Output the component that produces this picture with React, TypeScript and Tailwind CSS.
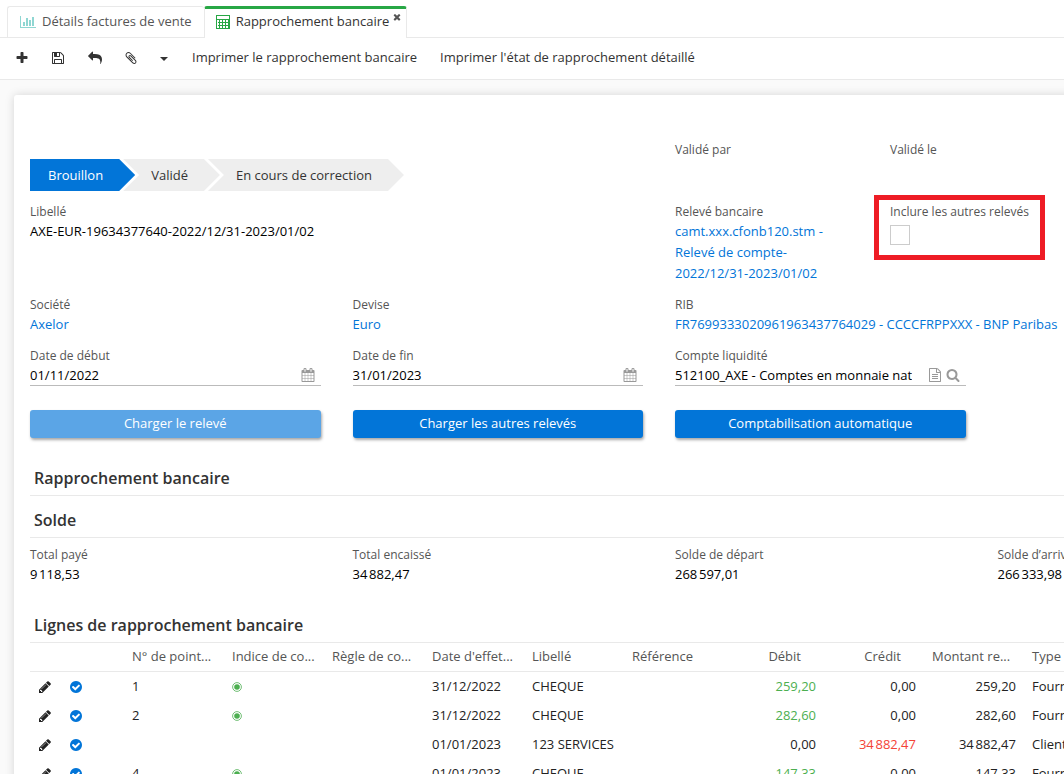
import { useState, type ReactNode } from "react";
import clsx from "clsx";

const icons = {
  plus: "M1600 736v192q0 40-28 68t-68 28h-416v416q0 40-28 68t-68 28h-192q-40 0-68-28t-28-68v-416h-416q-40 0-68-28t-28-68v-192q0-40 28-68t68-28h416v-416q0-40 28-68t68-28h192q40 0 68 28t28 68v416h416q40 0 68 28t28 68z",
  save: "M512 1536h768v-384h-768v384zm896 0h128v-896q0-14-10-38.5t-20-34.5l-281-281q-10-10-34-20t-39-10v416q0 40-28 68t-68 28h-576q-40 0-68-28t-28-68v-416h-128v1280h128v-416q0-40 28-68t68-28h832q40 0 68 28t28 68v416zm-384-928v-320q0-13-9.5-22.5t-22.5-9.5h-192q-13 0-22.5 9.5t-9.5 22.5v320q0 13 9.5 22.5t22.5 9.5h192q13 0 22.5-9.5t9.5-22.5zm640 32v928q0 40-28 68t-68 28h-1344q-40 0-68-28t-28-68v-1344q0-40 28-68t68-28h928q40 0 88 20t76 48l280 280q28 28 48 76t20 88z",
  forward:
    "M1792 640q0 26-19 45l-512 512q-19 19-45 19t-45-19-19-45v-256h-224q-98 0-175.5 6t-154 21.5-133 42.5-105.5 69.5-80 101-48.5 138.5-17.5 181q0 55 5 123 0 6 2.5 23.5t2.5 26.5q0 15-8.5 25t-23.5 10q-16 0-28-17-7-9-13-22t-13.5-30-10.5-24q-127-285-127-451 0-199 53-333 162-403 875-403h224v-256q0-26 19-45t45-19 45 19l512 512q19 19 19 45z",
  clip: "M1596 1385q0 117-79 196t-196 79q-135 0-235-100l-777-776q-113-115-113-271 0-159 110-270t269-111q158 0 273 113l605 606q10 10 10 22 0 16-30.5 46.5t-46.5 30.5q-13 0-23-10l-606-607q-79-77-181-77-106 0-179 75t-73 181q0 105 76 181l776 777q63 63 145 63 64 0 106-42t42-106q0-82-63-145l-581-581q-26-24-60-24-29 0-48 19t-19 48q0 32 25 59l410 410q10 10 10 22 0 16-31 47t-47 31q-12 0-22-10l-410-410q-63-61-63-149 0-82 57-139t139-57q88 0 149 63l581 581q100 98 100 235z",
  calendar:
    "M192 1664h288v-288h-288v288zm352 0h320v-288h-320v288zm-352-352h288v-320h-288v320zm352 0h320v-320h-320v320zm-352-384h288v-288h-288v288zm736 736h320v-288h-320v288zm-384-736h320v-288h-320v288zm768 736h288v-288h-288v288zm-384-352h320v-320h-320v320zm-352-864v-288q0-13-9.5-22.5t-22.5-9.5h-64q-13 0-22.5 9.5t-9.5 22.5v288q0 13 9.5 22.5t22.5 9.5h64q13 0 22.5-9.5t9.5-22.5zm736 864h288v-320h-288v320zm-384-384h320v-288h-320v288zm384 0h288v-288h-288v288zm32-480v-288q0-13-9.5-22.5t-22.5-9.5h-64q-13 0-22.5 9.5t-9.5 22.5v288q0 13 9.5 22.5t22.5 9.5h64q13 0 22.5-9.5t9.5-22.5zm384-64v1280q0 52-38 90t-90 38h-1408q-52 0-90-38t-38-90v-1280q0-52 38-90t90-38h128v-96q0-66 47-113t113-47h64q66 0 113 47t47 113v96h384v-96q0-66 47-113t113-47h64q66 0 113 47t47 113v96h128q52 0 90 38t38 90z",
  pencil:
    "M491 1536l91-91-235-235-91 91v107h128v128h107zm523-928q0-22-22-22-10 0-17 7l-542 542q-7 7-7 17 0 22 22 22 10 0 17-7l542-542q7-7 7-17zm-54-192l416 416-832 832h-416v-416zm683 96q0 53-37 90l-166 166-416-416 166-165q36-38 90-38 53 0 91 38l235 234q37 39 37 91z",
  check:
    "M1412 734q0-28-18-46l-91-90q-19-19-45-19t-45 19l-408 407-226-226q-19-19-45-19t-45 19l-91 90q-18 18-18 46 0 27 18 45l362 362q19 19 45 19 27 0 46-19l543-543q18-18 18-45zm252 162q0 209-103 385.5t-279.5 279.5-385.5 103-385.5-103-279.5-279.5-103-385.5 103-385.5 279.5-279.5 385.5-103 385.5 103 279.5 279.5 103 385.5z",
  search:
    "M1216 832q0-185-131.5-316.5t-316.5-131.5-316.5 131.5-131.5 316.5 131.5 316.5 316.5 131.5 316.5-131.5 131.5-316.5zm512 832q0 52-38 90t-90 38q-54 0-90-38l-343-342q-179 124-399 124-143 0-273.5-55.5t-225-150-150-225-55.5-273.5 55.5-273.5 150-225 225-150 273.5-55.5 273.5 55.5 225 150 150 225 55.5 273.5q0 220-124 399l343 343q37 37 37 90z",
  file: "M1596 380q28 28 48 76t20 88v1152q0 40-28 68t-68 28h-1344q-40 0-68-28t-28-68v-1600q0-40 28-68t68-28h896q40 0 88 20t76 48zm-444-244v376h376q-10-29-22-41l-313-313q-12-12-41-22zm384 1528v-1024h-416q-40 0-68-28t-28-68v-416h-768v1536h1280zm-1024-864q0-14 9-23t23-9h704q14 0 23 9t9 23v64q0 14-9 23t-23 9h-704q-14 0-23-9t-9-23v-64zm736 224q14 0 23 9t9 23v64q0 14-9 23t-23 9h-704q-14 0-23-9t-9-23v-64q0-14 9-23t23-9h704zm0 256q14 0 23 9t9 23v64q0 14-9 23t-23 9h-704q-14 0-23-9t-9-23v-64q0-14 9-23t23-9h704z",
  close:
    "M1490 1322q0 40-28 68l-136 136q-28 28-68 28t-68-28l-294-294-294 294q-28 28-68 28t-68-28l-136-136q-28-28-28-68t28-68l294-294-294-294q-28-28-28-68t28-68l136-136q28-28 68-28t68 28l294 294 294-294q28-28 68-28t68 28l136 136q28 28 28 68t-28 68l-294 294 294 294q28 28 28 68z",
};

function Icon({ name, className }: { name: keyof typeof icons; className?: string }) {
  return (
    <svg viewBox="0 0 1792 1792" fill="currentColor" aria-hidden="true" className={clsx("shrink-0", className)}>
      <path d={icons[name]} />
    </svg>
  );
}

function ChartIcon() {
  return (
    <svg viewBox="0 0 2048 1792" fill="currentColor" aria-hidden="true" className="h-[14px] w-4 text-[#8fd6d2]">
      <path d="M640 896v512h-256v-512h256zm384-512v1024h-256v-1024h256zm1024 1152v128h-2048v-1536h128v1408h1920zm-640-896v768h-256v-768h256zm384-384v1152h-256v-1152h256z" />
    </svg>
  );
}

function CalculatorIcon() {
  return (
    <svg viewBox="0 0 14 14" fill="none" stroke="currentColor" aria-hidden="true" className="size-[14px] text-[#28a745]">
      <rect x="0.5" y="0.5" width="13" height="13" />
      <path d="M1 4.5h12M2 7.5h10M2 10.5h10M3.5 5v8M6.5 5v8M9.5 5v8M12.5 5v8" />
    </svg>
  );
}

const label = "block text-xs leading-[18px] text-[#555]";
const value = "text-[13px] leading-[21px] text-black";

function Field({ title, className, children }: { title: string; className?: string; children?: ReactNode }) {
  return (
    <div className={className}>
      <div className={label}>{title}</div>
      <div className={value}>{children}</div>
    </div>
  );
}

function LinkField({ title, text, className }: { title: string; text: string; className?: string }) {
  return (
    <Field title={title} className={className}>
      <a href="#" className="text-[#0275d8] hover:underline">
        {text}
      </a>
    </Field>
  );
}

function InputField({
  id,
  title,
  initial,
  children,
}: {
  id: string;
  title: string;
  initial: string;
  children: ReactNode;
}) {
  const [text, setText] = useState(initial);
  return (
    <div className="col-span-3">
      <label htmlFor={id} className={label}>
        {title}
      </label>
      <div className="flex h-[21px] items-center gap-1 border-b border-[#bbb] pr-[6px] text-[#999]">
        <input
          id={id}
          value={text}
          onChange={(e) => setText(e.target.value)}
          className="mr-3 h-5 min-w-0 flex-1 bg-transparent text-[13px] text-black outline-none"
        />
        {children}
      </div>
    </div>
  );
}

function ActionButton({ children, disabled }: { children: ReactNode; disabled?: boolean }) {
  return (
    <button
      type="button"
      disabled={disabled}
      className={clsx(
        "col-span-3 h-7 rounded-[3px] text-[13px] font-medium text-white shadow-[1px_2px_3px_rgba(0,0,0,0.35)]",
        disabled ? "bg-[#5ba5e6]" : "bg-[#0275d8] hover:bg-[#025aa5]",
      )}
    >
      {children}
    </button>
  );
}

function SectionTitle({ children }: { children: ReactNode }) {
  return (
    <h2 className="h-[42px] border-b border-[#e9e9e9] px-1 pt-3 text-base leading-6 font-semibold text-[#333]">
      {children}
    </h2>
  );
}

const steps = [
  {
    title: "Brouillon",
    style: "bg-[#0275d8] pl-[18px] text-white [clip-path:polygon(0_0,calc(100%-16px)_0,100%_50%,calc(100%-16px)_100%,0_100%)]",
  },
  {
    title: "Validé",
    style: "-ml-3 bg-[#eee] pl-7 [clip-path:polygon(0_0,calc(100%-16px)_0,100%_50%,calc(100%-16px)_100%,0_100%,16px_50%)]",
  },
  {
    title: "En cours de correction",
    style: "-ml-3 bg-[#eee] pl-7 [clip-path:polygon(0_0,calc(100%-16px)_0,100%_50%,calc(100%-16px)_100%,0_100%,16px_50%)]",
  },
];

const columns = [
  { title: "N° de point..." },
  { title: "Indice de co..." },
  { title: "Règle de co..." },
  { title: "Date d'effet..." },
  { title: "Libellé" },
  { title: "Référence" },
  { title: "Débit", style: "pr-[27px] text-right" },
  { title: "Crédit", style: "pr-[27px] text-right" },
  { title: "Montant re..." },
];

type Line = {
  num: string;
  date: string;
  name: string;
  debit: string;
  credit: string;
  rest: string;
  type: string;
};

const lines: Line[] = [
  { num: "1", date: "31/12/2022", name: "CHEQUE", debit: "259,20", credit: "0,00", rest: "259,20", type: "Fournisseur" },
  { num: "2", date: "31/12/2022", name: "CHEQUE", debit: "282,60", credit: "0,00", rest: "282,60", type: "Fournisseur" },
  { num: "", date: "01/01/2023", name: "123 SERVICES", debit: "0,00", credit: "34\u202f882,47", rest: "34\u202f882,47", type: "Client" },
  { num: "4", date: "01/01/2023", name: "CHEQUE", debit: "147,33", credit: "0,00", rest: "147,33", type: "Fournisseur" },
];

const totals = [
  { title: "Total payé", amount: "9\u202f118,53" },
  { title: "Total encaissé", amount: "34\u202f882,47" },
  { title: "Solde de départ", amount: "268\u202f597,01" },
  { title: "Solde d’arrivée", amount: "266\u202f333,98" },
];

function Tabs() {
  return (
    <nav className="flex h-[38px] shrink-0 items-end text-[13px]">
      <div className="h-full w-[7px] border-b border-[#e9e9e9]" />
      <a
        href="#"
        className="flex h-8 items-center gap-[6px] rounded-t-[3px] border border-r-0 border-[#e9e9e9] pr-3 pl-3 text-[#555]"
      >
        <ChartIcon />
        Détails factures de vente
      </a>
      <div className="flex h-8 rounded-t-[3px] border-x border-t-3 border-x-[#e9e9e9] border-t-[#28a745] pr-1 pb-[3px] pl-[11px] text-[#333]">
        <a href="#" aria-current="page" className="flex items-center gap-[6px]">
          <CalculatorIcon />
          Rapprochement bancaire
        </a>
        <button type="button" aria-label="Fermer" className="ml-[3px] flex h-4 items-center text-[#555]">
          <Icon name="close" className="size-[10px]" />
        </button>
      </div>
      <div className="h-full flex-1 border-b border-[#e9e9e9]" />
    </nav>
  );
}

function Toolbar() {
  return (
    <div className="flex h-[42px] shrink-0 items-center border-b border-[#e9e9e9] px-[15px] pb-[2px] text-[13px] text-[#333]">
      <button type="button" aria-label="Nouveau" className="mr-[22px]">
        <Icon name="plus" className="size-[14px]" />
      </button>
      <button type="button" aria-label="Enregistrer" className="mr-[23px]">
        <Icon name="save" className="size-[14px]" />
      </button>
      <button type="button" aria-label="Annuler" className="mr-[22px]">
        <Icon name="forward" className="size-[14px] -scale-x-100" />
      </button>
      <button type="button" aria-label="Pièces jointes" className="mr-[22px]">
        <Icon name="clip" className="size-[14px]" />
      </button>
      <button type="button" aria-label="Plus" className="mr-6">
        <svg viewBox="0 0 8 4" fill="currentColor" className="mt-[3px] h-1 w-2">
          <path d="M0 0h8L4 4z" />
        </svg>
      </button>
      <button type="button" className="mr-[23px]">
        Imprimer le rapprochement bancaire
      </button>
      <button type="button">Imprimer l'état de rapprochement détaillé</button>
    </div>
  );
}

function LinesTable() {
  return (
    <table className="w-full table-fixed border-separate border-spacing-0 text-left text-[13px] text-[#222]">
      <colgroup>
        <col className="w-[30px]" />
        <col className="w-8" />
        <col className="w-9" />
        {columns.map((col) => (
          <col key={col.title} className="w-[100px]" />
        ))}
        <col />
      </colgroup>
      <thead className="text-[#555]">
        <tr className="h-[29px] *:border-b *:border-[#e9e9e9]">
          <td colSpan={3} />
          {columns.map((col) => (
            <th key={col.title} className={clsx("pl-1 font-normal whitespace-nowrap", col.style)}>
              {col.title}
            </th>
          ))}
          <th className="pl-1 font-normal">Type</th>
        </tr>
      </thead>
      <tbody>
        {lines.map((line, i) => (
          <tr key={i} className="h-[29px]">
            <td>
              <button type="button" aria-label="Modifier" className="mx-auto block">
                <Icon name="pencil" className="size-[14px]" />
              </button>
            </td>
            <td>
              <Icon name="check" className="mx-auto size-[14px] text-[#0275d8]" />
            </td>
            <td />
            <td className="pl-1">{line.num}</td>
            <td className="pl-1">
              {line.num && (
                <svg viewBox="0 0 10 10" className="size-[10px] text-[#4caf50]" aria-hidden="true">
                  <circle cx="5" cy="5" r="4.4" fill="none" stroke="currentColor" strokeWidth="0.8" />
                  <circle cx="5" cy="5" r="2.8" fill="currentColor" />
                </svg>
              )}
            </td>
            <td />
            <td className="pl-1">{line.date}</td>
            <td className="pl-1 whitespace-nowrap">{line.name}</td>
            <td />
            <td className={clsx("pr-3 text-right", line.debit !== "0,00" && "text-[#4caf50]")}>{line.debit}</td>
            <td className={clsx("pr-3 text-right", line.credit !== "0,00" && "text-[#f44336]")}>{line.credit}</td>
            <td className="pr-3 text-right">{line.rest}</td>
            <td className="pl-1">{line.type}</td>
          </tr>
        ))}
      </tbody>
    </table>
  );
}

export default function App() {
  return (
    <div className="flex h-screen flex-col overflow-hidden bg-white font-['Open_Sans',sans-serif]">
      <Tabs />
      <Toolbar />
      <main className="min-h-0 flex-1 overflow-hidden bg-[#fafafa] pt-[15px] pl-[14px]">
        <div className="min-h-full min-w-[1290px] rounded-[3px] bg-white px-4 pt-[46px] shadow-[0_0_10px_rgba(0,0,0,0.15)]">
          <div className="grid grid-cols-12 gap-x-8 gap-y-3">
            <ol className="col-span-6 flex pt-[18px] text-[13px] text-[#333]">
              {steps.map((step) => (
                <li key={step.title} className={clsx("flex h-8 items-center pt-px pr-8", step.style)}>
                  {step.title}
                </li>
              ))}
            </ol>
            <Field title="Validé par" className="col-span-2" />
            <Field title="Validé le" className="col-span-4" />

            <Field title="Libellé" className="col-span-6">
              AXE-EUR-19634377640-2022/12/31-2023/01/02
            </Field>
            <LinkField
              title="Relevé bancaire"
              text="camt.xxx.cfonb120.stm - Relevé de compte-2022/12/31-2023/01/02"
              className="col-span-2"
            />
            <div className="relative col-span-4">
              <label htmlFor="include-others" className={label}>
                Inclure les autres relevés
              </label>
              <input
                id="include-others"
                type="checkbox"
                className="mt-1 block size-5 appearance-none border border-[#ccc] bg-white checked:bg-[#0275d8]"
              />
              <div className="pointer-events-none absolute -top-2 -left-4 h-[65px] w-[171px] border-5 border-[#ee1c25]" />
            </div>

            <LinkField title="Société" text="Axelor" className="col-span-3" />
            <LinkField title="Devise" text="Euro" className="col-span-3" />
            <LinkField
              title="RIB"
              text="FR7699333020961963437764029 - CCCCFRPPXXX - BNP Paribas"
              className="col-span-6"
            />

            <InputField id="from" title="Date de début" initial="01/11/2022">
              <Icon name="calendar" className="size-[14px]" />
            </InputField>
            <InputField id="to" title="Date de fin" initial="31/01/2023">
              <Icon name="calendar" className="size-[14px]" />
            </InputField>
            <InputField id="account" title="Compte liquidité" initial="512100_AXE - Comptes en monnaie nationale">
              <Icon name="file" className="size-[14px]" />
              <Icon name="search" className="size-[14px]" />
            </InputField>
          </div>

          <div className="mt-6 grid grid-cols-12 gap-x-8">
            <ActionButton disabled>Charger le relevé</ActionButton>
            <ActionButton>Charger les autres relevés</ActionButton>
            <ActionButton>Comptabilisation automatique</ActionButton>
          </div>

          <div className="mt-4">
            <SectionTitle>Rapprochement bancaire</SectionTitle>
            <SectionTitle>Solde</SectionTitle>
          </div>
          <div className="mt-2 mb-4 grid grid-cols-12 gap-x-8">
            {totals.map((total) => (
              <Field key={total.title} title={total.title} className="col-span-3">
                {total.amount}
              </Field>
            ))}
          </div>

          <SectionTitle>Lignes de rapprochement bancaire</SectionTitle>
          <LinesTable />
        </div>
      </main>
    </div>
  );
}
